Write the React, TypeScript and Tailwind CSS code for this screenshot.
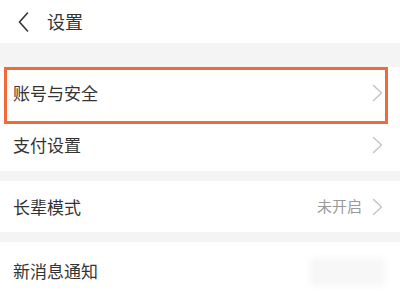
import React from 'react'

const Chevron = () => (
  <svg width="11" height="18" viewBox="0 0 11 18" fill="none" className="shrink-0">
    <path d="M1.5 1.5 L9.5 9 L1.5 16.5" stroke="#c4c4c4" strokeWidth="1.4" strokeLinecap="round" strokeLinejoin="round" />
  </svg>
)

interface RowProps {
  label: string
  value?: string
  arrow?: boolean
  className?: string
}

const Row: React.FC<RowProps> = ({ label, value, arrow = true, className = '' }) => (
  <div className={`flex items-center justify-between bg-white pl-[13px] pr-[17px] ${className}`}>
    <span className="text-[17px] text-[#333]">{label}</span>
    <div className="flex items-center gap-[10px]">
      {value && <span className="text-[15px] text-[#9a9a9a]">{value}</span>}
      {arrow && <Chevron />}
    </div>
  </div>
)

export default function App() {
  return (
    <div
      className="w-[400px] h-[300px] overflow-hidden bg-[#f4f4f4]"
      style={{ fontFamily: '"Noto Sans CJK SC", "Noto Sans", sans-serif' }}
    >
      <div className="h-[43px] bg-white flex items-center pl-[18px]">
        <svg width="11" height="20" viewBox="0 0 11 20" fill="none">
          <path d="M9.5 1 L1.5 10 L9.5 19" stroke="#333" strokeWidth="1.6" strokeLinecap="round" strokeLinejoin="round" />
        </svg>
        <span className="ml-[18px] text-[18px] text-[#333]">设置</span>
      </div>

      <div className="h-[24px]" />

      <div className="relative">
        <Row label="账号与安全" className="h-[52px]" />
        <div className="absolute left-[4px] top-0 w-[384px] h-[57px] border-[3px] border-[#f06a3a]" />
      </div>
      <Row label="支付设置" className="h-[52px]" />

      <div className="h-[10px]" />

      <Row label="长辈模式" value="未开启" className="h-[51px]" />

      <div className="h-[10px]" />

      <div className="relative">
        <Row label="新消息通知" arrow={false} className="h-[58px]" />
        <div className="absolute left-[310px] top-[16px] w-[75px] h-[28px] bg-[#f7f7f7] blur-[3px]" />
      </div>
    </div>
  )
}
